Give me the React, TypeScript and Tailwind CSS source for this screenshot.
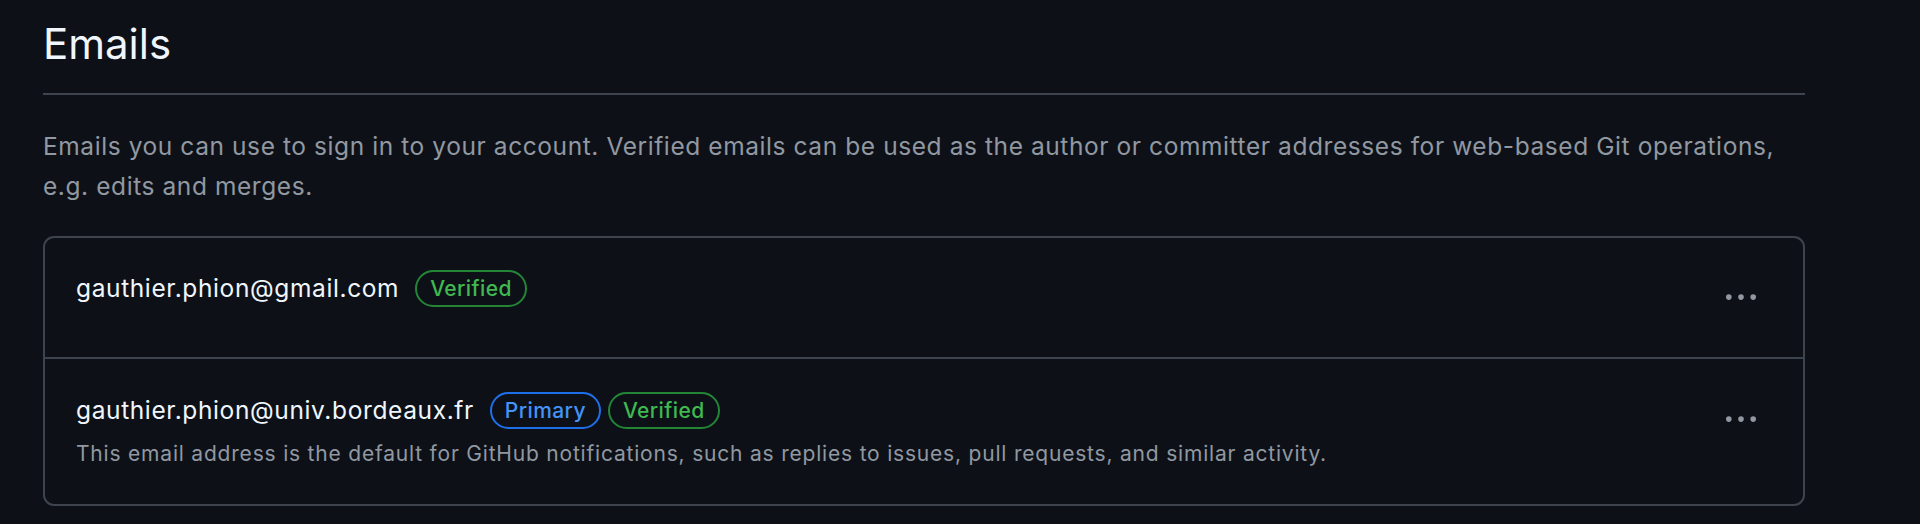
import React from 'react';

const Badge = ({ label, tone }: { label: string; tone: 'green' | 'blue' }) => (
    <span
        className={`inline-flex items-center h-[37px] px-[13px] rounded-full border-2 text-[21px] font-medium leading-none tracking-[0.4px] ${
            tone === 'green' ? 'border-[#238636] text-[#3fb950]' : 'border-[#1f6feb] text-[#4493f8]'
        }`}
    >
        {label}
    </span>
);

const KebabButton = () => (
    <button className="w-[56px] h-[56px] shrink-0 flex items-center justify-center rounded-[10px] text-[#9198a1]">
        <svg width="30" height="30" viewBox="0 0 16 16" fill="currentColor">
            <path d="M8 9a1.5 1.5 0 1 0 0-3 1.5 1.5 0 0 0 0 3ZM1.5 9a1.5 1.5 0 1 0 0-3 1.5 1.5 0 0 0 0 3Zm13 0a1.5 1.5 0 1 0 0-3 1.5 1.5 0 0 0 0 3Z" />
        </svg>
    </button>
);

interface EmailRowProps {
    email: string;
    primary?: boolean;
    note?: string;
}

const EmailRow = ({ email, primary, note }: EmailRowProps) => (
    <li className={`flex justify-between pl-[31px] pr-[34px] ${note ? 'pt-[33px] pb-[34px]' : 'pt-[32px] h-[119px]'} border-t-2 border-[#3d444d] first:border-t-0`}>
        <div className="flex flex-col">
            <div className="flex items-center h-[37px]">
                <span className="text-[24.5px] leading-[37px] tracking-[0.62px] text-[#f0f6fc] mr-[16px]">{email}</span>
                <div className="flex items-center gap-[7px]">
                    {primary && <Badge label="Primary" tone="blue" />}
                    <Badge label="Verified" tone="green" />
                </div>
            </div>
            {note && <p className="mt-[9px] text-[21px] leading-[31.5px] tracking-[0.8px] text-[#9198a1]">{note}</p>}
        </div>
        <KebabButton />
    </li>
);

export default function App() {
    return (
        <div className="min-h-screen w-full bg-[#0d1117] font-['Inter','Noto_Sans',sans-serif]">
            <div className="w-[1762px] ml-[43px] pt-[18px]">
                <h2 className="text-[42px] leading-[52px] font-normal text-[#f0f6fc] pb-[23px] border-b-2 border-[#3d444d]">
                    Emails
                </h2>
                <p className="mt-[31px] text-[24.5px] leading-[40px] tracking-[0.58px] text-[#9198a1]">
                    Emails you can use to sign in to your account. Verified emails can be used as the author or committer addresses for web-based Git operations,
                    <br />
                    e.g. edits and merges.
                </p>
                <ul className="mt-[30px] border-2 border-[#3d444d] rounded-[11px]">
                    <EmailRow email="gauthier.phion@gmail.com" />
                    <EmailRow
                        email="gauthier.phion@univ.bordeaux.fr"
                        primary
                        note="This email address is the default for GitHub notifications, such as replies to issues, pull requests, and similar activity."
                    />
                </ul>
            </div>
        </div>
    );
}
